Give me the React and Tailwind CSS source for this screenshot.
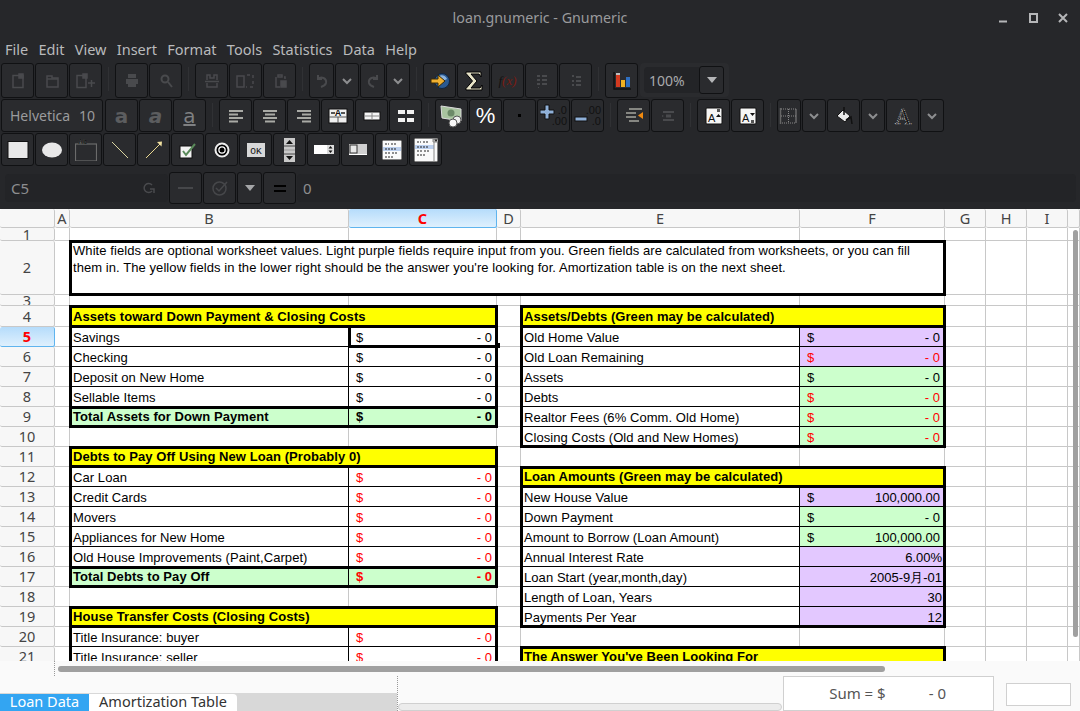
import React from 'react';

const DIM = '#494a4d';
const SANS = "font-['Noto_Sans',sans-serif]";

const Chevron = () => (
  <svg width="12" height="12" viewBox="0 0 12 12"><path d="M2 4l4 4 4-4" fill="none" stroke="#8d8e90" strokeWidth="2" /></svg>
);

const Ico = ({ children }) => <svg width="22" height="22" viewBox="0 0 22 22">{children}</svg>;

// Disabled toolbar glyphs
const icons = {
  newDoc: <g fill="none" stroke={DIM} strokeWidth="1.5"><path d="M6 5.5h10v12H6z" /><rect x="12" y="4" width="4" height="4" fill={DIM} /></g>,
  open: <g fill="none" stroke={DIM} strokeWidth="1.5"><path d="M6 7v10h11V8h-6V6H6z" /><path d="M6 9h11" /></g>,
  newFrom: <g fill="none" stroke={DIM} strokeWidth="1.5"><path d="M2 5.5h9v12H2z" /><rect x="8" y="4" width="4" height="4" fill={DIM} /><path d="M13 13h7M16.5 10v7" /></g>,
  print: <g fill={DIM}><rect x="7" y="4" width="8" height="4" /><rect x="5" y="9" width="12" height="5" /><rect x="7" y="14" width="8" height="3" /></g>,
  search: <g fill="none" stroke={DIM} strokeWidth="2"><circle cx="10" cy="9" r="3.5" /><path d="M13 12l4 5" /></g>,
  cut: <g fill="none" stroke={DIM} strokeWidth="1.5"><path d="M6 10V5h3v3h4V5h3v5M4 11.5h14M6 13v4h10v-4" /></g>,
  copy: <g fill="none" stroke={DIM} strokeWidth="1.5"><path d="M2 6h7v11H2zM12 5h3M18 5v3M18 11v3M18 17h-3M12 17h-1" /></g>,
  paste: <g fill="none" stroke={DIM} strokeWidth="1.5"><path d="M7 7v10h4M9 5h4v2H9zM15 7h1v2" /><rect x="12" y="11" width="5" height="6" fill={DIM} /></g>,
  undo: <path d="M7 5v4h4M7 9c3-3 9-1 8 4-.5 2-2 3-5 4" fill="none" stroke={DIM} strokeWidth="2" />,
  redo: <path d="M15 5v4h-4M15 9c-3-3-9-1-8 4 .5 2 2 3 5 4" fill="none" stroke={DIM} strokeWidth="2" />,
  sortA: <path d="M6 5h3v2H6zM11 5h5v2h-5zM6 9h3v2H6zM11 9h5v2h-5zM6 13h3v2H6zM11 13h5v2h-5zM7 17h1v1H7z" fill={DIM} />,
  sortD: <path d="M7 5h2v2H7zM11 6h5v2h-5zM7 10h2v2H7zM11 10h5v2h-5zM7 14h2v2H7zM11 14h5v2h-5z" fill={DIM} />,
  indentOff: <path d="M6 6h11v2H6zM9 9.5h5v3H9zM6 14h11v2H6zM5 10l2 1-2 1z" fill={DIM} />,
};

const Goto = () => (
  <Ico>
    <circle cx="13" cy="11" r="7.5" fill="#2b5a92" stroke="#11243e" />
    <path d="M10 6c3-2 7 0 8 3l-4 2z" fill="#8fb4dc" />
    <path d="M2 9h7V5l7 6-7 6v-4H2z" fill="#f0b030" stroke="#3a2a05" strokeWidth="1" />
  </Ico>
);

const Sigma = () => (
  <Ico>
    <path d="M3 2h15v5l-2-3H8l6 7-6 7h9l2-3v5H3v-1.5L9.5 11 3 3.5z" fill="#e8e4c8" stroke="#000" strokeWidth="1" />
  </Ico>
);

const Chart = () => (
  <Ico>
    <path d="M3 2v17h17" fill="none" stroke="#111" strokeWidth="1.5" />
    <rect x="5" y="5" width="4" height="12" fill="#d33a20" />
    <rect x="10" y="10" width="4" height="7" fill="#f0b020" />
    <rect x="15" y="7" width="4" height="10" fill="#2f6fc0" />
    <path d="M5 4h4" stroke="#eee" strokeWidth="1.5" />
  </Ico>
);

const Align = ({ dir }) => {
  const lines = dir === 'l'
    ? [[4, 18], [4, 13], [4, 18], [4, 13]]
    : dir === 'c'
      ? [[4, 18], [6, 16], [4, 18], [6, 16]]
      : [[4, 18], [9, 18], [4, 18], [9, 18]];
  return (
    <Ico>
      {lines.map(([a, b], i) => (
        <path key={i} d={`M${a} ${6 + i * 3.5}H${b}`} stroke="#a9aaa5" strokeWidth="2" />
      ))}
    </Ico>
  );
};

const Merge = () => (
  <Ico>
    <rect x="2" y="4" width="18" height="14" fill="#f0f0f0" stroke="#111" />
    <path d="M2 12h18M11 12v6" stroke="#555" />
    <path d="M4 8h4M14 8h4" stroke="#222" strokeWidth="1.5" />
    <text x="11" y="11" textAnchor="middle" fontSize="9" fontWeight="700" fontFamily="Liberation Sans" fill="#111">A</text>
  </Ico>
);

const Unmerge = () => (
  <Ico>
    <rect x="3" y="7" width="16" height="8" fill="#f4f4f4" stroke="#111" />
    <path d="M3 11h16M11 7v8" stroke="#888" />
  </Ico>
);

const Split = () => (
  <Ico>
    <path d="M3 5h7v4H3zM12 5h7v4h-7zM3 13h7v4H3zM12 13h7v4h-7z" fill="#f2f2f2" />
  </Ico>
);

const Money = () => (
  <svg width="26" height="26" viewBox="0 0 26 26">
    <path d="M2 3l20 3v12L3 15z" fill="#a9c4a0" stroke="#ddd" />
    <circle cx="12" cy="10" r="3.5" fill="#6c8a68" />
    <circle cx="18" cy="17" r="4" fill="#eee" stroke="#555" />
    <circle cx="14" cy="20" r="4" fill="#f7f7f7" stroke="#555" />
  </svg>
);

const Decimal = ({ plus }) => (
  <svg width="28" height="24" viewBox="0 0 28 24">
    {plus ? (
      <path d="M5 1h4v5h5v4H9v5H5v-5H0V6h5z" fill="#8fb0d8" stroke="#111" />
    ) : (
      <rect x="1" y="13" width="12" height="4" fill="#8fb0d8" stroke="#111" />
    )}
    <text x="27" y="10" textAnchor="end" fontSize="11" fontFamily="Liberation Sans" fill="#111">{plus ? '.0' : '.00'}</text>
    <text x="27" y="21" textAnchor="end" fontSize="11" fontFamily="Liberation Sans" fill="#111">{plus ? '.00' : '.0'}</text>
  </svg>
);

const Indent = () => (
  <Ico>
    <path d="M6 4h13M3 8h10M3 12h10M6 16h10" stroke="#a5a69f" strokeWidth="1.5" />
    <path d="M20 7l-5 3.5 5 3.5z" fill="#f08a10" />
  </Ico>
);

const Orient = ({ up }) => (
  <Ico>
    <rect x="3" y="3" width="16" height="16" rx="1" fill="#f6f6f6" stroke="#111" />
    <text x="5" y="17" fontSize="11" fontFamily="Liberation Sans" fill="#111">A</text>
    <path d={up ? 'M13 12l2.5-3 2.5 3z' : 'M13 8h5l-2.5 3z'} fill="#111" />
    <path d={up ? 'M14 4h3v3h-3z' : 'M14 15h3v3h-3z'} fill="#555" />
  </Ico>
);

const Borders = () => (
  <svg width="20" height="22" viewBox="0 0 20 22">
    <path d="M1.5 3v16" stroke="#666" strokeWidth="1.5" />
    <path d="M2 4h15v14H2M17 4v14M9.5 4v14M2 11h15" fill="none" stroke="#888" strokeDasharray="1 1" />
  </svg>
);

const Bucket = () => (
  <Ico>
    <path d="M4 11l6-6 7 6-5 6z" fill="#e8e8e8" stroke="#111" />
    <path d="M11 2v8" stroke="#111" strokeWidth="1.5" />
    <path d="M13 15l5-3 1 7" fill="none" stroke="#111" strokeWidth="1.5" />
  </Ico>
);

const FontColor = () => (
  <Ico>
    <text x="11" y="19" textAnchor="middle" fontSize="23" fontFamily="Liberation Serif" fill="#111" stroke="#d8d8d8" strokeWidth="0.7" strokeDasharray="1 1">A</text>
  </Ico>
);

const Shape = ({ kind }) => {
  if (kind === 'rect') return <Ico><rect x="1" y="2.5" width="20" height="17" fill="#e8e8e8" stroke="#111" /></Ico>;
  if (kind === 'ellipse') return <Ico><ellipse cx="11" cy="11" rx="10" ry="7.5" fill="#e8e8e8" /></Ico>;
  if (kind === 'frame') {
    return (
      <Ico>
        <rect x="0.5" y="5" width="21" height="17" fill="none" stroke="#6b6b6b" strokeWidth="1.2" />
        <text x="3" y="5" fontSize="7" fontWeight="700" fontFamily="Liberation Sans" fill="#111" stroke="#999" strokeWidth="0.15">Ab</text>
      </Ico>
    );
  }
  if (kind === 'line') return <Ico><path d="M3 3l16 16" stroke="#d8d4a0" strokeWidth="1" /></Ico>;
  return (
    <Ico>
      <path d="M3 19L17 5" stroke="#e8d890" strokeWidth="1" />
      <path d="M14 3l5-.5-.5 5z" fill="#f0e0a0" />
    </Ico>
  );
};

const Check = () => (
  <Ico>
    <rect x="3" y="7" width="12" height="12" fill="#f4f4f4" stroke="#111" />
    <path d="M6 12l3 4 9-11" fill="none" stroke="#5a8a5a" strokeWidth="2" />
  </Ico>
);

const Radio = () => (
  <Ico>
    <circle cx="11" cy="11" r="6.5" fill="none" stroke="#eee" strokeWidth="2" />
    <circle cx="11" cy="11" r="4.5" fill="#fff" stroke="#000" strokeWidth="1.5" />
    <circle cx="11" cy="11" r="2.5" fill="#000" />
  </Ico>
);

const OkBtn = () => (
  <svg width="18" height="14" viewBox="0 0 18 14">
    <rect width="18" height="14" fill="#d8d8d8" />
    <text x="9" y="11" textAnchor="middle" fontSize="9.5" fontFamily="Liberation Mono" fill="#111">OK</text>
  </svg>
);

const Spinner = () => (
  <svg width="11" height="24" viewBox="0 0 11 24">
    <rect width="11" height="24" fill="#c9c9c9" />
    <path d="M5.5 2L9 6H2zM5.5 22L2 18h7z" fill="#111" />
    <path d="M0 8h11M0 16h11" stroke="#444" />
    <path d="M0 12h11" stroke="#999" />
  </svg>
);

const SpinBox = () => (
  <svg width="20" height="9" viewBox="0 0 20 9">
    <rect width="20" height="9" fill="#fff" />
    <rect x="13" width="7" height="9" fill="#ddd" />
    <path d="M16.5 1l2 2.5h-4zM16.5 8l-2-2.5h4z" fill="#111" />
  </svg>
);

const Slider = () => (
  <svg width="18" height="11" viewBox="0 0 18 11">
    <rect width="18" height="11" fill="#d0d0d0" />
    <rect x="1" y="1" width="7" height="8" fill="#e8e8e8" stroke="#333" />
    <path d="M0 10.5h18" stroke="#fff" />
  </svg>
);

const ListBox = ({ combo }) => (
  <svg width={combo ? 24 : 20} height={combo ? 24 : 20} viewBox={combo ? '0 0 24 24' : '0 0 20 20'}>
    <rect width={combo ? 24 : 20} height={combo ? 24 : 20} fill="#fafafa" stroke="#111" />
    <rect x="1" y="7" width={combo ? 19 : 18} height="4" fill="#bcd0ee" />
    <path d="M3 4h4M9 4h6M3 9h12M3 13h5M10 13h5M3 17h9" stroke="#222" strokeDasharray="2 1" />
    {combo && <path d="M20 0v24M19 1h5v3h-5z" stroke="#888" fill="#eee" />}
    {combo && <path d="M20.5 1.5h3L22 4z" fill="#111" />}
  </svg>
);

const Btn = ({ w = 'w-[33px]', h = 'h-full', children }) => (
  <div className={`${w} ${h} shrink-0 flex items-center justify-center rounded-[3px] border border-[#101113] bg-[#2a2b2e]`}>
    {children}
  </div>
);

const Sep = () => <div className="w-[11px] shrink-0 flex justify-center"><div className="w-px h-6 mt-1 bg-[#303134]" /></div>;

const Toolbar1 = () => (
  <div className="flex gap-px h-[35px] pl-px">
    <Btn><Ico>{icons.newDoc}</Ico></Btn>
    <Btn><Ico>{icons.open}</Ico></Btn>
    <Btn><Ico>{icons.newFrom}</Ico></Btn>
    <Sep />
    <Btn><Ico>{icons.print}</Ico></Btn>
    <Btn><Ico>{icons.search}</Ico></Btn>
    <Sep />
    <Btn><Ico>{icons.cut}</Ico></Btn>
    <Btn><Ico>{icons.copy}</Ico></Btn>
    <Btn><Ico>{icons.paste}</Ico></Btn>
    <Sep />
    <Btn w="w-[25px]"><Ico>{icons.undo}</Ico></Btn>
    <Btn w="w-[24px]"><Chevron /></Btn>
    <Btn w="w-[25px]"><Ico>{icons.redo}</Ico></Btn>
    <Btn w="w-[24px]"><Chevron /></Btn>
    <Sep />
    <Btn><Goto /></Btn>
    <Btn><Sigma /></Btn>
    <Btn>
      <span className="font-['Liberation_Serif',serif] italic text-[13px] text-[#111]">f<span className="text-[#7a1c14]">(x)</span></span>
    </Btn>
    <Btn><Ico>{icons.sortA}</Ico></Btn>
    <Btn><Ico>{icons.sortD}</Ico></Btn>
    <Sep />
    <Btn><Chart /></Btn>
    <div className="w-[89px] h-[34px] ml-px flex items-center rounded bg-[#2a2b2e] pl-[4px] pr-[5px]">
      <div className={`flex-1 h-[26px] flex items-center pl-[5px] rounded-l bg-[#232427] text-[14px] text-[#a8a9ab] ${SANS}`}>100%</div>
      <Btn w="w-[25px]" h="h-[28px]">
        <svg width="12" height="8" viewBox="0 0 12 8"><path d="M1 1h10L6 7z" fill="#b5b6b8" /></svg>
      </Btn>
    </div>
  </div>
);

const FontLetter = ({ children, italic, underline }) => (
  <span className={`font-['DejaVu_Sans',sans-serif] font-bold text-[20px] leading-none text-[#5c5d5f] ${italic ? 'italic' : ''} ${underline ? 'font-normal underline text-[#7f8082]' : ''}`}>
    {children}
  </span>
);

const Toolbar2 = () => (
  <div className="flex gap-px h-[33px] pl-px mt-px">
    <div className={`w-[102px] mr-px shrink-0 h-full flex items-center rounded-[3px] border border-[#101113] bg-[#2a2b2e] text-[14px] text-[#9a9b9d] ${SANS}`}>
      <span className="pl-[8px] w-[71px]">Helvetica</span>
      <span className="pl-[6px]">10</span>
    </div>
    <Btn><FontLetter>a</FontLetter></Btn>
    <Btn><FontLetter italic>a</FontLetter></Btn>
    <Btn><FontLetter underline>a</FontLetter></Btn>
    <Sep />
    <Btn><Align dir="l" /></Btn>
    <Btn><Align dir="c" /></Btn>
    <Btn><Align dir="r" /></Btn>
    <Btn><Merge /></Btn>
    <Btn><Unmerge /></Btn>
    <Btn><Split /></Btn>
    <Sep />
    <Btn><Money /></Btn>
    <Btn><span className="font-['Liberation_Sans',sans-serif] text-[22px] text-white">%</span></Btn>
    <Btn><div className="w-[3px] h-[3px] bg-black" /></Btn>
    <Btn><Decimal plus /></Btn>
    <Btn><Decimal /></Btn>
    <Sep />
    <Btn><Indent /></Btn>
    <Btn><Ico>{icons.indentOff}</Ico></Btn>
    <Sep />
    <Btn><Orient up /></Btn>
    <Btn><Orient /></Btn>
    <Sep />
    <Btn w="w-[24px]"><Borders /></Btn>
    <Btn w="w-[24px]"><Chevron /></Btn>
    <Btn><Bucket /></Btn>
    <Btn w="w-[24px]"><Chevron /></Btn>
    <Btn><FontColor /></Btn>
    <Btn w="w-[24px]"><Chevron /></Btn>
  </div>
);

const Toolbar3 = () => (
  <div className="flex gap-px h-[33px] pl-px mt-px">
    <Btn><Shape kind="rect" /></Btn>
    <Btn><Shape kind="ellipse" /></Btn>
    <Btn><Shape kind="frame" /></Btn>
    <Btn><Shape kind="line" /></Btn>
    <Btn><Shape kind="arrow" /></Btn>
    <Btn><Check /></Btn>
    <Btn><Radio /></Btn>
    <Btn><OkBtn /></Btn>
    <Btn><Spinner /></Btn>
    <Btn><SpinBox /></Btn>
    <Btn><Slider /></Btn>
    <Btn><ListBox /></Btn>
    <Btn><ListBox combo /></Btn>
  </div>
);

const FormulaBar = () => (
  <div className={`flex items-center gap-px h-[32px] mt-[6px] pl-[5px] pr-1 text-[#8d8e90] text-[15px] ${SANS}`}>
    <div className="w-[163px] h-[28px] flex items-center justify-between pl-[6px] pr-[13px] rounded-sm bg-[#232427]">
      <span>C5</span>
      <svg width="12" height="12" viewBox="0 0 12 12"><path d="M9 3a4.5 4.5 0 1 0 0 6M7 7h4v4" fill="none" stroke={DIM} strokeWidth="1.5" /></svg>
    </div>
    <Btn><div className="w-[15px] h-[2px] bg-[#46474a]" /></Btn>
    <Btn>
      <svg width="18" height="18" viewBox="0 0 18 18"><circle cx="8.5" cy="9.5" r="6.5" fill="none" stroke="#46474a" strokeWidth="1.5" /><path d="M5 9l3 3 8-9" fill="none" stroke="#46474a" strokeWidth="1.5" /></svg>
    </Btn>
    <Btn w="w-[25px]"><svg width="10" height="6" viewBox="0 0 10 6"><path d="M0 0h10L5 6z" fill="#a5a6a8" /></svg></Btn>
    <Btn><div className="w-3 h-[7px] border-y-2 border-black" /></Btn>
    <div className="flex-1 h-[28px] flex items-center pl-[6px] rounded-sm bg-[#232427]">0</div>
  </div>
);

// sheet layout
const COLS = ['A', 'B', 'C', 'D', 'E', 'F', 'G', 'H', 'I', 'J'];
const ROWS = Array.from({ length: 22 }, (_, i) => i + 1);
const colIdx = (c) => COLS.indexOf(c) + 2; // row header is track 1, so 'hdr' maps to 1
const rowIdx = (r) => r + 1;
const area = (r, c, r2 = r, c2 = c) => ({
  gridRow: `${rowIdx(r)} / ${rowIdx(r2) + 1}`,
  gridColumn: `${colIdx(c)} / ${colIdx(c2) + 1}`,
});

const RED = 'text-[#ff0000]';
const P = 'bg-[#e3c8ff]';
const G = 'bg-[#ccffcc]';
const HEADER = 'flex items-center justify-center overflow-hidden rounded-[2px] border-r border-b text-[14.5px] leading-none';
const HEADER_OFF = 'border-[#c8c8c8] bg-[#f7f7f7] text-[#444]';
const HEADER_ON = 'border-[#5fb4ee] bg-gradient-to-b from-[#b5dcfb] to-[#dff0fd] font-bold text-[#ff0000]';

const BLOCKS = [
  {
    col: 'B', val: 'C', row: 4, title: 'Assets toward Down Payment & Closing Costs',
    items: [['Savings'], ['Checking'], ['Deposit on New Home'], ['Sellable Items']],
    total: 'Total Assets for Down Payment',
  },
  {
    col: 'B', val: 'C', row: 11, title: 'Debts to Pay Off Using New Loan (Probably 0)', red: true,
    items: [['Car Loan'], ['Credit Cards'], ['Movers'], ['Appliances for New Home'], ['Old House Improvements (Paint,Carpet)']],
    total: 'Total Debts to Pay Off',
  },
  {
    col: 'B', val: 'C', row: 19, title: 'House Transfer Costs (Closing Costs)', red: true,
    items: [['Title Insurance: buyer'], ['Title Insurance: seller'], ['']],
  },
  {
    col: 'E', val: 'F', row: 4, title: 'Assets/Debts (Green may be calculated)',
    items: [
      ['Old Home Value', P],
      ['Old Loan Remaining', P, true],
      ['Assets', G],
      ['Debts', G, true],
      ['Realtor Fees (6% Comm. Old Home)', G, true],
      ['Closing Costs (Old and New Homes)', G, true],
    ],
  },
  {
    col: 'E', val: 'F', row: 12, title: 'Loan Amounts (Green may be calculated)',
    items: [
      ['New House Value', P, false, '100,000.00'],
      ['Down Payment', G],
      ['Amount to Borrow (Loan Amount)', G, false, '100,000.00'],
      ['Annual Interest Rate', P, false, null, '6.00%'],
      ['Loan Start (year,month,day)', P, false, null, '2005-9月-01'],
      ['Length of Loan, Years', P, false, null, '30'],
      ['Payments Per Year', P, false, null, '12'],
    ],
  },
  { col: 'E', val: 'F', row: 21, title: "The Answer You've Been Looking For", items: [] },
];

const Amount = ({ r, c, bg = 'bg-white', red, amount = '- 0', plain, bold }) => (
  <div
    style={area(r, c)}
    className={`z-10 flex items-center justify-between border-b border-black text-[13px] ${bg} ${red ? RED : 'text-black'} ${bold ? 'font-bold' : 'pt-[2px]'} ${plain ? 'pr-[3px]' : 'pl-[7px] pr-[5px]'}`}
  >
    {plain ? <span className="ml-auto">{plain}</span> : <><span>$</span><span>{amount}</span></>}
  </div>
);

const Block = ({ block }) => {
  const { col, val, row, title, items, total, red } = block;
  const last = row + items.length + (total ? 1 : 0);
  return (
    <>
      <div style={area(row, col, row, val)} className="z-10 flex items-center pl-[3px] bg-[#ffff00] text-[13px] tracking-[0.07px] font-bold text-black">{title}</div>
      {items.map(([label, bg, isRed, amount, plain], i) => (
        <React.Fragment key={label || i}>
          <div style={area(row + 1 + i, col)} className="z-10 flex items-center pl-[3px] pt-[2px] bg-white border-r border-b border-black text-[13px] tracking-[0.07px] whitespace-nowrap text-black">{label}</div>
          <Amount r={row + 1 + i} c={val} bg={bg} red={red || isRed} amount={amount || '- 0'} plain={plain} />
        </React.Fragment>
      ))}
      {total && (
        <>
          <div style={area(last, col)} className={`z-10 flex items-center pl-[3px] ${G} border-r border-black text-[13px] tracking-[0.07px] font-bold text-black`}>{total}</div>
          <Amount r={last} c={val} bg={G} red={red} bold />
          <div style={area(last, col, last, val)} className="z-20 -m-px border-[3px] border-black" />
        </>
      )}
      <div style={area(row, col, row, val)} className="z-20 -m-px border-[3px] border-black" />
      <div style={area(row, col, last, val)} className="z-20 -m-px border-[3px] border-black" />
    </>
  );
};

const Sheet = () => (
  <div className="relative h-[452px] shrink-0 overflow-hidden bg-white font-['Liberation_Sans',sans-serif]">
    <div className="grid grid-cols-[55px_15px_279px_148px_24px_279px_145px_41px_41px_41px_12px] grid-rows-[19px_13px_54px_11px_21px_repeat(18,20px)]">
      <div style={area(0, 'hdr')} className={`${HEADER} ${HEADER_OFF}`} />
      {COLS.map((c) => (
        <div key={c} style={area(0, c)} className={`${HEADER} ${SANS} ${c === 'C' ? HEADER_ON : HEADER_OFF}`}>
          {c === 'J' ? '' : c}
        </div>
      ))}
      {ROWS.map((r) => (
        <React.Fragment key={r}>
          <div style={area(r, 'hdr')} className={`${HEADER} ${SANS} ${r === 5 ? HEADER_ON : HEADER_OFF}`}>
            {r === 22 ? '' : r}
          </div>
          {COLS.map((c) => <div key={c} style={area(r, c)} className="border-r border-b border-[#c8c8c8]" />)}
        </React.Fragment>
      ))}

      <div style={area(2, 'B', 2, 'F')} className="z-10 bg-white pl-[3px] pr-[30px] pt-px text-[13px] tracking-[0.07px] leading-[17px] text-black">
        White fields are optional worksheet values. Light purple fields require input from you. Green fields are calculated from worksheets, or you can fill them in. The yellow fields in the lower right should be the answer you're looking for. Amortization table is on the next sheet.
      </div>
      <div style={area(2, 'B', 2, 'F')} className="z-20 -m-px border-[3px] border-black" />

      {BLOCKS.map((b) => <Block key={b.title} block={b} />)}

      {/* selected cell */}
      <div style={area(5, 'C')} className="relative z-30 -m-px border-[3px] border-r-0 border-t-0 border-black">
        <div className="absolute right-[-2px] bottom-[-3px] w-[5px] h-[5px] bg-black" />
      </div>
    </div>

    {/* vertical scrollbar */}
    <div className="absolute right-[2px] top-[21px] bottom-[24px] w-[5px] rounded-full bg-[#a0a0a0]" />
  </div>
);

const Footer = () => (
  <div className={`flex-1 flex flex-col bg-[#fafafa] ${SANS}`}>
    <div className="h-[15px] flex items-center pl-[54px]">
      <div className="h-full border-l border-dotted border-[#999]" />
      <div className="ml-[3px] w-[827px] h-[6px] rounded-full bg-[#a0a0a0]" />
    </div>
    <div className="flex-1 flex">
      <div className="w-[398px] flex flex-col justify-end border-r border-dotted border-[#999]">
        <div className="h-[18px] flex items-stretch border-t border-[#d8d8d8] bg-[#d8d8d8] text-[14.5px] leading-none">
          <div className="w-[89px] flex items-center justify-center bg-[#33a5f2] text-white pb-[2px]">Loan Data</div>
          <div className="w-[148px] flex items-center justify-center rounded-tr-sm bg-white text-[#333] pb-[2px]">Amortization Table</div>
        </div>
      </div>
      <div className="w-[384px] flex flex-col justify-end">
        <div className="h-[8px] rounded-md border border-[#d0d0d0] bg-[#ececec]" />
      </div>
      <div className="w-[211px] h-[35px] ml-px flex items-center justify-end pr-[47px] border border-[#d0d0d0] bg-white text-[15px] text-[#555]">
        <span>Sum = $</span><span className="ml-[43px]">- 0</span>
      </div>
      <div className="w-[65px] h-[23px] ml-[12px] mt-[7px] border border-[#d0d0d0] bg-white" />
    </div>
  </div>
);

const App = () => (
  <div className="w-[1080px] h-[711px] flex flex-col overflow-hidden bg-[#26272a]">
    <div className={`relative h-[34px] shrink-0 flex items-center justify-center pt-px text-[14.25px] text-[#9a9b9d] ${SANS}`}>
      loan.gnumeric - Gnumeric
      <div className="absolute right-[12px] top-[13px] flex gap-[20px]">
        <svg width="10" height="10" viewBox="0 0 10 10"><path d="M1 8.5h8" stroke="#b5b6b8" strokeWidth="2" /></svg>
        <svg width="10" height="10" viewBox="0 0 10 10"><rect x="2" y="1" width="7" height="8" fill="none" stroke="#b5b6b8" strokeWidth="2" /></svg>
        <svg width="10" height="10" viewBox="0 0 10 10"><path d="M1 1l8 8M9 1l-8 8" stroke="#b5b6b8" strokeWidth="2" /></svg>
      </div>
    </div>
    <div className={`h-[29px] shrink-0 flex items-center gap-[10.3px] pl-[5px] pt-[2px] text-[14.5px] text-[#b9babc] ${SANS}`}>
      {['File', 'Edit', 'View', 'Insert', 'Format', 'Tools', 'Statistics', 'Data', 'Help'].map((m) => <span key={m}>{m}</span>)}
    </div>
    <Toolbar1 />
    <Toolbar2 />
    <Toolbar3 />
    <FormulaBar />
    <div className="h-[5px] shrink-0" />
    <Sheet />
    <Footer />
  </div>
);

export default App;
